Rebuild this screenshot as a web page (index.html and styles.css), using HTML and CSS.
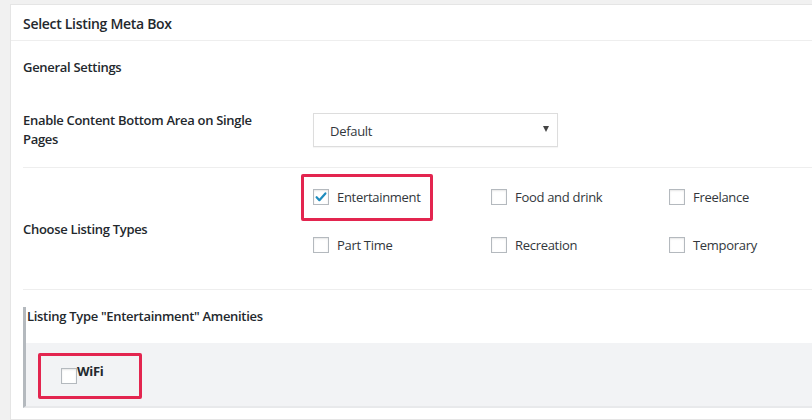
FILE: index.html
```html
<!DOCTYPE html>
<html lang="en">
<head>
    <meta charset="UTF-8">
    <meta name="viewport" content="width=device-width, initial-scale=1.0">
    <title>Select Listing Meta Box</title>
    <link rel="stylesheet" href="styles.css">
</head>
<body>
    <div class="screen">
        <div class="postbox">
            <h2 class="postbox-title">Select Listing Meta Box</h2>

            <div class="inside">
                <div class="section-title">General Settings</div>

                <div class="field-row field-select">
                    <div class="field-label">Enable Content Bottom Area on Single Pages</div>
                    <div class="select-box">
                        <span>Default</span>
                        <span class="select-arrow"></span>
                    </div>
                </div>

                <div class="field-row field-types">
                    <div class="field-label">Choose Listing Types</div>
                    <div class="type-grid">
                        <label class="option marked marked-type">
                            <span class="checkbox checked">
                                <svg viewBox="0 0 16 16" width="16" height="16"><path d="M3.6 8.2l2.8 3 6-6.8" fill="none" stroke="#1e8cbe" stroke-width="2.2" stroke-linecap="round" stroke-linejoin="round"/></svg>
                            </span>
                            Entertainment
                        </label>
                        <label class="option"><span class="checkbox"></span>Food and drink</label>
                        <label class="option"><span class="checkbox"></span>Freelance</label>
                        <label class="option"><span class="checkbox"></span>Part Time</label>
                        <label class="option"><span class="checkbox"></span>Recreation</label>
                        <label class="option"><span class="checkbox"></span>Temporary</label>
                    </div>
                </div>

                <div class="amenities">
                    <div class="amenities-title">Listing Type "Entertainment" Amenities</div>
                    <div class="amenities-body">
                        <label class="amenity marked marked-amenity"><span class="checkbox"></span>WiFi</label>
                    </div>
                </div>
            </div>
        </div>
        <div class="side-strip"></div>
    </div>
</body>
</html>
```

FILE: styles.css
```css
body {
    margin: 0;
    background: #f1f1f1;
    font-family: "Open Sans", "Noto Sans", sans-serif;
    font-size: 13px;
    letter-spacing: -0.3px;
    color: #23282d;
    overflow: hidden;
}

.screen {
    display: flex;
    height: 420px;
}

.postbox {
    flex: 1;
    margin: 4px 0 0 10px;
    background: #fff;
    border: 1px solid #e5e5e5;
    border-right: none;
}

.side-strip {
    width: 4px;
    background: #edf1f9;
}

.postbox-title {
    margin: 0;
    height: 34px;
    line-height: 35px;
    padding: 1px 12px 0;
    font-size: 14px;
    font-weight: 600;
    border-bottom: 1px solid #eee;
}

.inside {
    padding-left: 12px;
}

.section-title {
    padding-top: 17px;
    line-height: 19px;
    font-weight: 600;
}

/* settings rows: label column + field column */
.field-row {
    display: grid;
    grid-template-columns: 290px 1fr;
    border-bottom: 1px solid #eee;
}

.field-label {
    font-weight: 600;
    line-height: 19px;
    width: 240px;
}

.field-select {
    align-items: center;
    padding: 34px 0 18px;
}

.select-box {
    width: 245px;
    height: 34px;
    box-sizing: border-box;
    border: 1px solid #ddd;
    padding: 1px 8px 0 16px;
    display: flex;
    align-items: center;
    justify-content: space-between;
    color: #32373c;
    box-shadow: 0 1px 1px rgba(0, 0, 0, 0.04);
}

.select-arrow {
    width: 0;
    height: 0;
    border-left: 3px solid transparent;
    border-right: 3px solid transparent;
    border-top: 6px solid #444;
    margin-top: -4px;
}

.field-types {
    align-items: start;
    padding: 19px 0 34px;
}

.field-types .field-label {
    padding-top: 33px;
}

.type-grid {
    display: grid;
    grid-template-columns: repeat(3, 178px);
    row-gap: 28px;
}

.option {
    display: flex;
    align-items: center;
    gap: 8px;
    height: 20px;
    color: #32373c;
}

.checkbox {
    width: 16px;
    height: 16px;
    box-sizing: border-box;
    border: 1px solid #b4b9be;
    background: #fff;
    box-shadow: inset 0 1px 2px rgba(0, 0, 0, 0.1);
    flex-shrink: 0;
}

.checkbox svg {
    display: block;
    margin: -1px;
}

/* red annotation frames around chosen items */
.marked {
    position: relative;
}

.marked::after {
    content: "";
    position: absolute;
    box-sizing: border-box;
    border: 3px solid #e3254f;
    border-radius: 2px;
}

.marked-type::after {
    left: -12px;
    top: -13px;
    width: 132px;
    height: 47px;
}

.amenities {
    margin: 17px 0 0;
    border-left: 3px solid #b4b9be;
    border-bottom: 2px solid #e8e9eb;
}

.amenities-title {
    height: 36px;
    line-height: 19px;
    padding-left: 1px;
    font-weight: 600;
}

.amenities-body {
    background: #f2f3f5;
    height: 63px;
    box-sizing: border-box;
    padding: 19px 0 0 35px;
}

.amenity {
    display: flex;
    align-items: flex-start;
    width: 60px;
    font-weight: 700;
    line-height: 19px;
}

.amenity .checkbox {
    margin-top: 6px;
}

.marked-amenity::after {
    left: -23px;
    top: -9px;
    width: 104px;
    height: 46px;
}
```
